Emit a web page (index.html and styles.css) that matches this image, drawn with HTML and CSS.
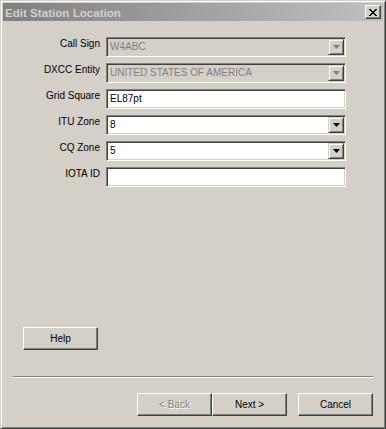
FILE: index.html
```html
<!DOCTYPE html>
<html lang="en">

<head>
    <meta charset="UTF-8">
    <meta name="viewport" content="width=device-width, initial-scale=1.0">
    <title>Edit Station Location</title>
    <link rel="stylesheet" href="styles.css">
</head>

<body>
    <div class="window">
        <div class="titlebar">
            <span class="title">Edit Station Location</span>
            <button class="close" aria-label="Close">
                <svg width="8" height="7" viewBox="0 0 8 7" shape-rendering="crispEdges">
                    <path d="M0 0h2v1H0z M6 0h2v1H6z M1 1h2v1H1z M5 1h2v1H5z M2 2h4v1H2z M3 3h2v1H3z M2 4h4v1H2z M1 5h2v1H1z M5 5h2v1H5z M0 6h2v1H0z M6 6h2v1H6z" fill="#000" />
                </svg>
            </button>
        </div>

        <div class="content">
            <div class="form">
                <label class="label">Call Sign</label>
                <div class="field disabled">
                    <span class="value">W4ABC</span>
                    <span class="drop"><svg width="7" height="4" viewBox="0 0 7 4"><path d="M0 0h7L3.5 4z" fill="#808080" /></svg></span>
                </div>

                <label class="label">DXCC Entity</label>
                <div class="field disabled">
                    <span class="value">UNITED STATES OF AMERICA</span>
                    <span class="drop"><svg width="7" height="4" viewBox="0 0 7 4"><path d="M0 0h7L3.5 4z" fill="#808080" /></svg></span>
                </div>

                <label class="label">Grid Square</label>
                <div class="field">
                    <span class="value">EL87pt</span>
                </div>

                <label class="label">ITU Zone</label>
                <div class="field">
                    <span class="value">8</span>
                    <span class="drop"><svg width="7" height="4" viewBox="0 0 7 4"><path d="M0 0h7L3.5 4z" fill="#000" /></svg></span>
                </div>

                <label class="label">CQ Zone</label>
                <div class="field">
                    <span class="value">5</span>
                    <span class="drop"><svg width="7" height="4" viewBox="0 0 7 4"><path d="M0 0h7L3.5 4z" fill="#000" /></svg></span>
                </div>

                <label class="label">IOTA ID</label>
                <div class="field">
                    <span class="value"></span>
                </div>
            </div>

            <div class="help-row">
                <button class="btn">Help</button>
            </div>

            <div class="separator"></div>

            <div class="footer">
                <button class="btn" disabled>&lt; Back</button>
                <button class="btn">Next &gt;</button>
                <button class="btn cancel">Cancel</button>
            </div>
        </div>
    </div>
</body>

</html>
```

FILE: styles.css
```css
body {
    margin: 0;
    padding: 0;
    font-family: "Liberation Sans", Arial, sans-serif;
    font-size: 10px;
    color: #000;
    background-color: #d4d0c8;
}

/* Janela estilo Windows classico */
.window {
    width: 386px;
    height: 429px;
    box-sizing: border-box;
    border: 1px solid;
    border-color: #d4d0c8 #404040 #404040 #d4d0c8;
    box-shadow: inset 1px 1px #fff, inset -1px -1px #808080;
    padding: 2px;
    background-color: #d4d0c8;
    display: flex;
    flex-direction: column;
}

.titlebar {
    height: 18px;
    background: linear-gradient(to right, #808080, #c0c0c0);
    display: flex;
    align-items: center;
    padding-left: 2px;
    padding-right: 2px;
}

.title {
    flex: 1;
    font-weight: bold;
    font-size: 11.6px;
    color: #d4d0c8;
}

.close {
    width: 16px;
    height: 14px;
    box-sizing: border-box;
    padding: 0;
    border: 1px solid;
    border-color: #fff #404040 #404040 #fff;
    box-shadow: inset -1px -1px #808080;
    background-color: #d4d0c8;
    display: flex;
    align-items: center;
    justify-content: center;
}

.close svg {
    display: block;
    margin-top: 1px;
}

.content {
    flex: 1;
    display: flex;
    flex-direction: column;
}

.form {
    display: grid;
    grid-template-columns: 97px 240px;
    column-gap: 6px;
    row-gap: 6px;
    padding-top: 16px;
}

.label {
    text-align: right;
    line-height: 12px;
    padding-top: 1px;
}

/* Campos afundados */
.field {
    height: 20px;
    box-sizing: border-box;
    border: 1px solid;
    border-color: #808080 #fff #fff #808080;
    box-shadow: inset 1px 1px #404040, inset -1px -1px #d4d0c8;
    padding: 1px;
    background-color: #fff;
    display: flex;
}

.field.disabled {
    background-color: #d4d0c8;
    color: #808080;
}

.value {
    flex: 1;
    line-height: 16px;
    padding-left: 2px;
    white-space: nowrap;
    overflow: hidden;
}

.drop {
    width: 16px;
    height: 16px;
    box-sizing: border-box;
    border: 1px solid;
    border-color: #d4d0c8 #404040 #404040 #d4d0c8;
    box-shadow: inset 1px 1px #fff, inset -1px -1px #808080;
    background-color: #d4d0c8;
    display: flex;
    align-items: center;
    justify-content: center;
}

.drop svg {
    display: block;
}

.help-row {
    margin-top: auto;
    padding-left: 20px;
}

.btn {
    width: 75px;
    height: 23px;
    box-sizing: border-box;
    border: 1px solid;
    border-color: #fff #404040 #404040 #fff;
    box-shadow: inset -1px -1px #808080;
    background-color: #d4d0c8;
    font-family: "Liberation Sans", Arial, sans-serif;
    font-size: 10px;
    color: #000;
    padding: 0;
}

.btn:disabled {
    color: #808080;
    text-shadow: 1px 1px #fff;
}

.separator {
    margin: 26px 10px 0 10px;
    height: 0;
    border-top: 1px solid #808080;
    border-bottom: 1px solid #fff;
}

.footer {
    display: flex;
    justify-content: flex-end;
    margin-top: 15px;
    padding-right: 10px;
    padding-bottom: 10px;
}

.cancel {
    margin-left: 11px;
}
```
